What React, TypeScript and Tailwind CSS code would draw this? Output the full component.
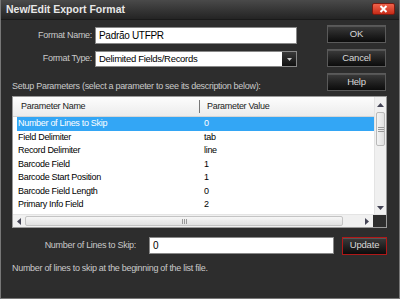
import React from "react";

const rows = [
  ["Number of Lines to Skip", "0"],
  ["Field Delimiter", "tab"],
  ["Record Delimiter", "line"],
  ["Barcode Field", "1"],
  ["Barcode Start Position", "1"],
  ["Barcode Field Length", "0"],
  ["Primary Info Field", "2"],
];

const font = { fontFamily: '"Liberation Sans", Arial, sans-serif' };

// dark dialog button
const DarkButton = ({ label, red }: { label: string; red?: boolean }) => (
  <button
    className={`w-full h-[18px] text-[9.5px] tracking-[-0.2px] text-[#d8d8d8] bg-gradient-to-b from-[#3c3c3c] to-[#0c0c0c] border ${
      red ? "border-[#b01818]" : "border-[#5a5a5a]"
    } shadow-[inset_0_1px_0_#555]`}
  >
    {label}
  </button>
);

const App = () => {
  return (
    <div
      className="w-[400px] h-[299px] bg-[#2d2d2d] border-l border-r border-b border-[#777] text-[9px] tracking-[-0.3px] text-[#c9c9c9] overflow-hidden"
      style={font}
    >
      {/* Title bar */}
      <div className="h-[20px] flex items-center justify-between pl-[5px] pr-[4px] bg-gradient-to-b from-[#4a4a4a] to-[#242424] border-b border-[#1a1a1a]">
        <span className="font-bold text-[10.5px] tracking-normal text-[#e8e8e8]">
          New/Edit Export Format
        </span>
        <div className="w-[23px] h-[12px] mt-[-2px] rounded-[2px] bg-gradient-to-b from-[#f0624a] to-[#c72a16] border border-[#7a1a10] flex items-center justify-center">
          <svg width="9" height="8" viewBox="0 0 9 8">
            <path d="M1.5 1 L7.5 7 M7.5 1 L1.5 7" stroke="#fff" strokeWidth="2" />
          </svg>
        </div>
      </div>

      <div className="flex pl-[11px] pr-[13px]">
        <div className="flex-1">
          {/* Top form */}
          <div className="flex items-center mt-[7px] h-[17px]">
            <span className="w-[83px] text-right pr-[3px]">Format Name:</span>
            <div className="w-[202px] h-[17px] bg-white border border-[#888] text-black text-[10px] px-[3px] flex items-center">
              Padrão UTFPR
            </div>
          </div>
          <div className="flex items-center mt-[7px] h-[16px]">
            <span className="w-[83px] text-right pr-[3px]">Format Type:</span>
            <div className="w-[202px] h-[16px] bg-white border border-[#888] text-black text-[9.5px] flex items-center">
              <span className="flex-1 px-[3px]">Delimited Fields/Records</span>
              <div className="w-[14px] h-full bg-gradient-to-b from-[#3a3a3a] to-[#111] flex items-center justify-center">
                <svg width="5" height="3" viewBox="0 0 5 3">
                  <path d="M0 0 L5 0 L2.5 3 Z" fill="#ccc" />
                </svg>
              </div>
            </div>
          </div>
          <div className="mt-[13px] h-[12px] leading-[12px]">
            Setup Parameters (select a parameter to see its description below):
          </div>
        </div>
        <div className="w-[59px] flex flex-col gap-[6px] mt-[5px]">
          <DarkButton label="OK" />
          <DarkButton label="Cancel" />
          <DarkButton label="Help" />
        </div>
      </div>

      {/* Parameter table */}
      <div className="mx-[11px] mt-[4px] w-[375px] h-[132px] border border-[#9a9a9a] bg-white flex flex-col text-black">
        <div className="flex flex-1 min-h-0">
          <div className="flex-1 flex flex-col">
            <div className="h-[20px] shrink-0 flex items-center bg-gradient-to-b from-[#fdfdfd] to-[#ececec] border-b border-[#d5d5d5] text-[#222]">
              <span className="w-[187px] pl-[8px] border-r border-[#777] h-[13px] leading-[13px]">
                Parameter Name
              </span>
              <span className="pl-[7px]">Parameter Value</span>
            </div>
            <div className="pl-[4px]">
              {rows.map(([name, value], i) => (
                <div
                  key={name}
                  className={`h-[13.5px] flex items-center ${
                    i === 0 ? "bg-[#33a6f5] text-white" : ""
                  }`}
                >
                  <span className="w-[187px] pl-[1px]">{name}</span>
                  <span>{value}</span>
                </div>
              ))}
            </div>
          </div>
          {/* vertical scrollbar */}
          <div className="w-[12px] flex flex-col bg-[#f0f0f0] border-l border-[#e4e4e4]">
            <div className="h-[15px] flex items-center justify-center">
              <svg width="7" height="4" viewBox="0 0 7 4">
                <path d="M0 4 L7 4 L3.5 0 Z" fill="#445" />
              </svg>
            </div>
            <div className="mx-[1px] h-[34px] border border-[#b9b9b9] rounded-[2px] bg-gradient-to-r from-[#f4f4f4] to-[#e0e0e0] flex flex-col items-center justify-center gap-[1px]">
              <div className="w-[6px] h-px bg-[#999]" />
              <div className="w-[6px] h-px bg-[#999]" />
              <div className="w-[6px] h-px bg-[#999]" />
            </div>
            <div className="flex-1" />
            <div className="h-[12px] flex items-center justify-center">
              <svg width="7" height="4" viewBox="0 0 7 4">
                <path d="M0 0 L7 0 L3.5 4 Z" fill="#445" />
              </svg>
            </div>
          </div>
        </div>
        {/* horizontal scrollbar */}
        <div className="h-[13px] flex bg-[#f0f0f0] border-t border-[#e4e4e4]">
          <div className="w-[12px] flex items-center justify-center">
            <svg width="4" height="7" viewBox="0 0 4 7">
              <path d="M4 0 L4 7 L0 3.5 Z" fill="#445" />
            </svg>
          </div>
          <div className="w-[318px] my-[1px] border border-[#c4c4c4] rounded-[2px] bg-gradient-to-b from-[#f6f6f6] to-[#e2e2e2] flex items-center justify-center gap-[1px]">
            <div className="w-px h-[5px] bg-[#999]" />
            <div className="w-px h-[5px] bg-[#999]" />
            <div className="w-px h-[5px] bg-[#999]" />
          </div>
          <div className="flex-1" />
          <div className="w-[12px] flex items-center justify-center">
            <svg width="4" height="7" viewBox="0 0 4 7">
              <path d="M0 0 L0 7 L4 3.5 Z" fill="#445" />
            </svg>
          </div>
          <div className="w-[13px] bg-[#2d2d2d]" />
        </div>
      </div>

      {/* Selected parameter editor */}
      <div className="flex items-center mt-[9px] pl-[11px] h-[17px]">
        <span className="w-[127px] text-right pr-[3px]">Number of Lines to Skip:</span>
        <div className="ml-[10px] w-[185px] h-[17px] bg-white border border-[#888] text-black text-[10px] px-[3px] flex items-center">
          0
        </div>
        <div className="ml-[8px] w-[45px]">
          <DarkButton label="Update" red />
        </div>
      </div>
      <div className="pl-[11px] mt-[8px]">
        Number of lines to skip at the beginning of the list file.
      </div>
    </div>
  );
};

export default App;
